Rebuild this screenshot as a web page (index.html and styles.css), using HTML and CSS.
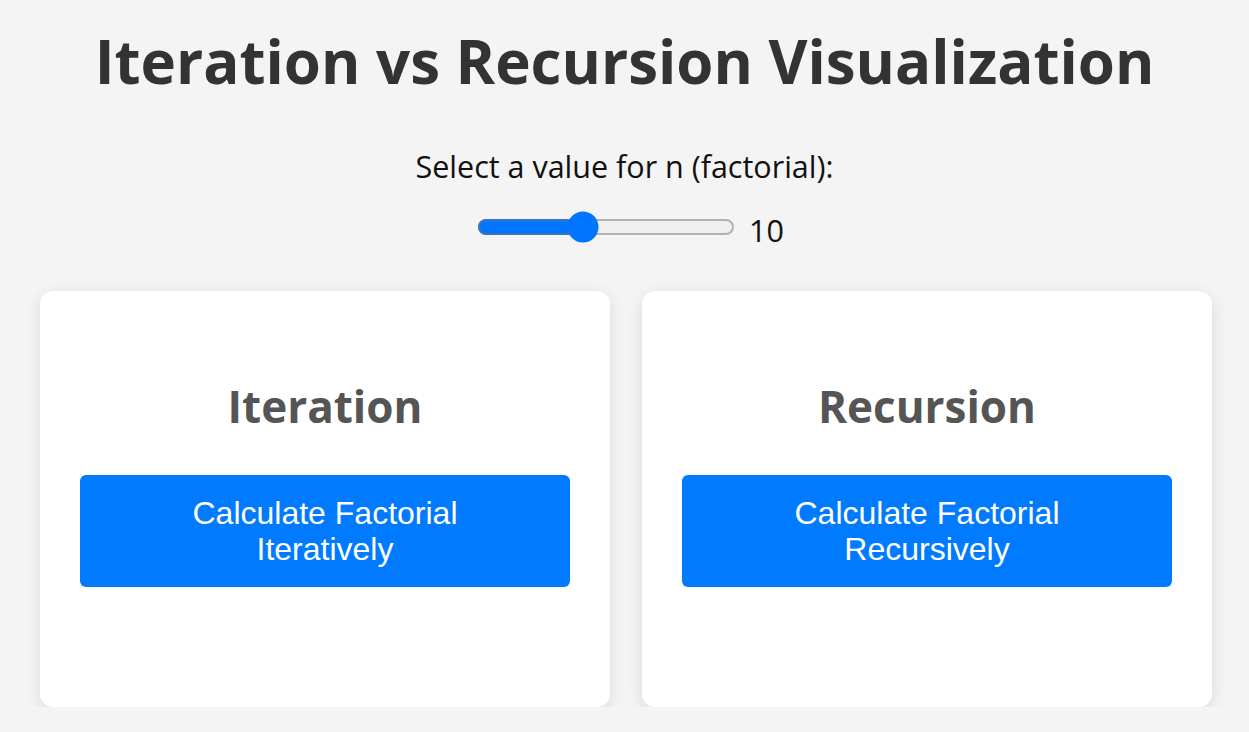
FILE: index.html
```html
<!DOCTYPE html>
<html lang="en">
<head>
<meta charset="utf-8">
<title>Iteration vs Recursion Visualization</title>
<link rel="stylesheet" href="styles.css">
</head>
<body>
  <h1 class="title">Iteration vs Recursion Visualization</h1>
  <div class="controls">
    <label class="label" for="n">Select a value for n (factorial):</label>
    <div class="slider-row">
      <input class="slider" id="n" type="range" min="0" max="25" value="10">
      <span class="value">10</span>
    </div>
  </div>
  <div class="cards">
    <section class="card">
      <h2 class="card-title">Iteration</h2>
      <button class="btn">Calculate Factorial Iteratively</button>
    </section>
    <section class="card">
      <h2 class="card-title">Recursion</h2>
      <button class="btn">Calculate Factorial Recursively</button>
    </section>
  </div>
</body>
</html>
```
FILE: styles.css
```css
html, body {
  margin: 0;
  padding: 0;
}
body {
  background: #f4f4f4;
  font-family: "Open Sans", "Noto Sans", sans-serif;
  color: #111;
}
.title {
  margin: 24px 0 0;
  font-size: 60px;
  line-height: 74px;
  font-weight: 700;
  color: #333;
  text-align: center;
}
.controls {
  display: flex;
  flex-direction: column;
  align-items: center;
  margin-top: 48px;
}
.label {
  font-size: 30.5px;
  line-height: 40px;
}
.slider-row {
  display: flex;
  align-items: center;
  gap: 14px;
  margin-top: 21px;
  padding-left: 12px;
  height: 40px;
}
.slider {
  zoom: 2;
  margin: 0;
}
.value {
  font-size: 30.5px;
  line-height: 40px;
  margin-top: 6px;
}
.cards {
  display: grid;
  grid-template-columns: 1fr 1fr;
  gap: 32px;
  padding: 0 37px 0 40px;
  margin-top: 44px;
}
.card {
  background: #fff;
  border-radius: 13px;
  box-shadow: 0 4px 16px rgba(0, 0, 0, 0.11);
  height: 416px;
  box-sizing: border-box;
  padding: 87px 40px 0;
  display: flex;
  flex-direction: column;
  align-items: stretch;
}
.card-title {
  margin: 0;
  font-size: 44px;
  line-height: 56px;
  font-weight: 700;
  color: #555;
  text-align: center;
}
.btn {
  margin-top: 41px;
  height: 112px;
  padding: 20px 48px;
  border: none;
  border-radius: 6px;
  background: #007bff;
  color: #fff;
  font-family: "Liberation Sans", Arial, sans-serif;
  font-size: 32px;
  line-height: 36px;
}
```
